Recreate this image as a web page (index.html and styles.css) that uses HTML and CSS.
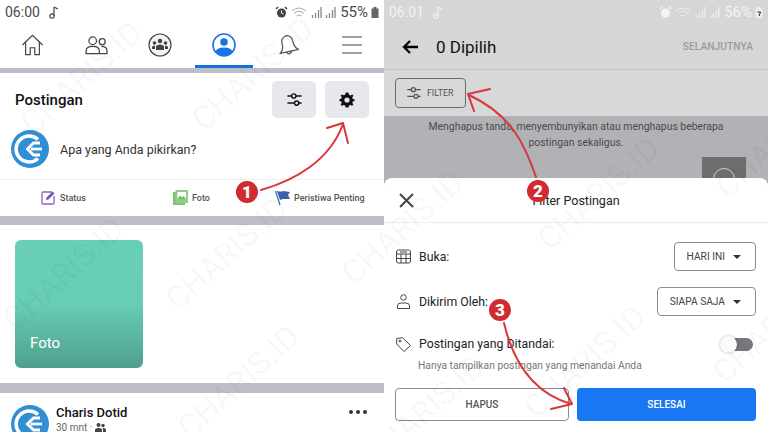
FILE: index.html
```html
<!DOCTYPE html>
<html lang="en">
<head>
    <meta charset="UTF-8">
    <meta name="viewport" content="width=device-width, initial-scale=1.0">
    <title>Filter Postingan</title>
    <link rel="stylesheet" href="styles.css">
</head>
<body>

<svg width="0" height="0" class="defs">
    <symbol id="logo" viewBox="0 0 38 38">
        <circle cx="19" cy="19" r="19" fill="#2f8ed4"/>
        <path d="M27 9.500A13 13 0 1 0 27 28.500" fill="none" stroke="#fff" stroke-width="3.600"/>
        <path d="M29 13H22.500L16.500 19 22.500 25H29" fill="none" stroke="#fff" stroke-width="3"/>
        <path d="M20 19H31" stroke="#fff" stroke-width="2.800"/>
    </symbol>
    <symbol id="sliders" viewBox="0 0 24 24">
        <path d="M2 7H8M14 7H22M2 17H12M18 17H22" fill="none" stroke="currentColor" stroke-width="2"/>
        <circle cx="11" cy="7" r="3" fill="none" stroke="currentColor" stroke-width="2"/>
        <circle cx="15" cy="17" r="3" fill="none" stroke="currentColor" stroke-width="2"/>
    </symbol>
</svg>

<div class="stage">

    <!-- kiri -->
    <div class="pane">
        <div class="status">
            <span class="time">06:00</span>
            <svg class="note" width="10" height="13" viewBox="0 0 10 13"><path d="M5 1V10M5 1 9 3" fill="none" stroke="#444" stroke-width="1.200"/><circle cx="3" cy="10" r="2.200" fill="none" stroke="#444" stroke-width="1.200"/></svg>
            <span class="status-right">
                <svg width="13" height="13" viewBox="0 0 13 13"><circle cx="6.500" cy="7" r="4.500" fill="#444"/><path d="M1 3 3 1M12 3 10 1" stroke="#444" stroke-width="1.500"/><path d="M6.500 4.500V7L8.500 8" fill="none" stroke="#fff"/></svg>
                <svg width="17" height="13" viewBox="0 0 17 13"><path d="M1 5Q8 -1 15 5M3 7.500Q8 3 13 7.500M5.500 10Q8 8 10.500 10" fill="none" stroke="#aaa"/></svg>
                <svg width="11" height="13" viewBox="0 0 11 13"><path d="M1.500 12V9M4.500 12V7M7.500 12V4M10 12V1" stroke="#888" stroke-width="1.300"/></svg>
                <svg width="11" height="13" viewBox="0 0 11 13"><path d="M1.500 12V9M4.500 12V7M7.500 12V4M10 12V1" stroke="#888" stroke-width="1.300"/></svg>
                <span class="pct">55%</span>
                <svg width="8" height="13" viewBox="0 0 8 13"><path d="M2.500 1H5.500V2.500H7.500V12H.5V2.500H2.500Z" fill="#666"/></svg>
            </span>
        </div>

        <div class="nav">
            <svg width="23" height="22" viewBox="0 0 24 24" fill="none" stroke="#444" stroke-width="1.300"><path d="M1 12 12 1.500 23 12M4.500 9V22.500H9.500V15H14.500V22.500H19.500V9"/></svg>
            <svg width="23" height="19" viewBox="0 0 24 20" fill="none" stroke="#444" stroke-width="1.300"><circle cx="8" cy="5" r="4"/><circle cx="18" cy="6" r="3.200"/><path d="M1 18.500V16Q1 11 8 11T15 16V18.500ZM17 11Q23 11 23 15.500V18.500H15.500"/></svg>
            <svg width="24" height="24" viewBox="0 0 24 24"><circle cx="12" cy="12" r="11" fill="#f4f4f4" stroke="#444" stroke-width="1.200"/><circle cx="12" cy="8" r="2.300" fill="#444"/><circle cx="6.500" cy="10" r="1.800" fill="#444"/><circle cx="17.500" cy="10" r="1.800" fill="#444"/><path d="M8 17V13Q12 10 16 13V17ZM4 16V13.500L7 12.500V16ZM20 16V13.500L17 12.500V16Z" fill="#444"/></svg>
            <svg width="24" height="24" viewBox="0 0 24 24"><circle cx="12" cy="12" r="11" fill="#fff" stroke="#1a73e3" stroke-width="1.600"/><circle cx="12" cy="9" r="3.800" fill="#1a73e3"/><path d="M3.500 18.500Q5 14.500 12 14.500T20.500 18.500Q17 23 12 23T3.500 18.500Z" fill="#1a73e3"/></svg>
            <svg width="22" height="24" viewBox="0 0 22 24" fill="none" stroke="#555" stroke-width="1.200"><g transform="rotate(-12 11 12)"><path d="M2 18.500Q6 15 5.500 9.500T11 2.500Q16.500 3 16.500 9.500T20.500 18.500ZM8 19Q10 23 13.500 19"/></g></svg>
            <svg width="20" height="18" viewBox="0 0 20 18" stroke="#444" stroke-width="1.200"><path d="M0 1H20M0 9H20M0 17H20"/></svg>
        </div>
        <div class="nav-active"></div>
        <div class="strip strip-thin"></div>

        <div class="composer">
            <div class="composer-head">
                <h2>Postingan</h2>
                <div class="square-btn"><svg class="sq-icon" width="17" height="17"><use href="#sliders"/></svg></div>
                <div class="square-btn"><svg width="16" height="16" viewBox="0 0 16 16"><path d="M8 .5 9.500 .8 10 2.800 11.600 3.400 13.300 2.400 14.400 3.700 13.300 5.400 13.800 7 15.600 7.500V9.100L13.800 9.600 13.300 11 14.400 12.600 13.100 13.800 11.500 12.900 10 13.500 9.500 15.500H6.700L6.100 13.500 4.600 12.900 2.900 13.900 1.700 12.600 2.700 11 2.200 9.500 .4 9V7.200L2.200 6.700 2.800 5.200 1.700 3.600 3 2.400 4.600 3.300 6.100 2.700 6.600 .8Z M8 5.400A2.600 2.600 0 1 0 8 10.600 2.600 2.600 0 1 0 8 5.400Z" fill="#111" fill-rule="evenodd"/></svg></div>
            </div>
            <div class="composer-input">
                <svg width="38" height="38"><use href="#logo"/></svg>
                <span>Apa yang Anda pikirkan?</span>
            </div>
            <div class="actions">
                <div class="action action-status">
                    <svg width="15" height="15" viewBox="0 0 15 15"><path d="M11 2H2Q1 2 1 3V13Q1 14 2 14H12Q13 14 13 13V6" fill="none" stroke="#8a63c9" stroke-width="1.300"/><path d="M5 10 5.500 7.500 11.500 1.500 13.500 3.500 7.500 9.500Z" fill="#7b55c0"/></svg>
                    Status
                </div>
                <div class="action action-foto">
                    <svg width="15" height="15" viewBox="0 0 15 15"><rect x="0" y="2" width="12" height="13" fill="#7cc576"/><rect x="2.500" y="0" width="12.500" height="13" fill="#8fd085"/><rect x="4.500" y="2" width="8.500" height="7" fill="#fff"/><path d="M4.500 9 7 5.500 9 7.500 10.500 6 13 9Z" fill="#6fbb68"/></svg>
                    Foto
                </div>
                <div class="action action-event">
                    <svg width="15" height="16" viewBox="0 0 15 16"><path d="M.5 1 5 15" stroke="#3d6cb4" stroke-width="1.200"/><path d="M2 1 Q6 2 8 1L15 2 13 5 15 9 8 9 5 10Z" fill="#3b5fa8"/></svg>
                    Peristiwa Penting
                </div>
            </div>
        </div>
        <div class="strip strip-wide"></div>

        <div class="album-row">
            <div class="album"><span>Foto</span></div>
        </div>
        <div class="strip strip-wide strip-last"></div>

        <div class="post">
            <svg width="38" height="38"><use href="#logo"/></svg>
            <div class="post-meta">
                <div class="post-name">Charis Dotid</div>
                <div class="post-sub">30 mnt &middot;
                    <svg width="11" height="10" viewBox="0 0 11 10" fill="#444"><circle cx="3.500" cy="2" r="2"/><circle cx="8" cy="2.500" r="1.700"/><path d="M0 10V7Q0 5 3.500 5T7 7V10ZM8 10V6.500Q8 5 7 5Q11 4.500 11 7V10Z"/></svg>
                </div>
            </div>
            <div class="dots"><i></i><i></i><i></i></div>
        </div>
    </div>

    <!-- kanan -->
    <div class="pane pane-dim">
        <div class="status status-dim">
            <span class="time">06:01</span>
            <svg class="note" width="10" height="13" viewBox="0 0 10 13"><path d="M5 1V10M5 1 9 3" fill="none" stroke="#f2f2f2" stroke-width="1.200"/><circle cx="3" cy="10" r="2.200" fill="none" stroke="#f2f2f2" stroke-width="1.200"/></svg>
            <span class="status-right">
                <svg width="13" height="13" viewBox="0 0 13 13"><circle cx="6.500" cy="7" r="4.500" fill="#f4f4f4"/><path d="M1 3 3 1M12 3 10 1" stroke="#f4f4f4" stroke-width="1.500"/></svg>
                <svg width="17" height="13" viewBox="0 0 17 13"><path d="M1 5Q8 -1 15 5M3 7.500Q8 3 13 7.500M5.500 10Q8 8 10.500 10" fill="none" stroke="#eee"/></svg>
                <svg width="11" height="13" viewBox="0 0 11 13"><path d="M1.500 12V9M4.500 12V7M7.500 12V4M10 12V1" stroke="#eee" stroke-width="1.300"/></svg>
                <svg width="11" height="13" viewBox="0 0 11 13"><path d="M1.500 12V9M4.500 12V7M7.500 12V4M10 12V1" stroke="#eee" stroke-width="1.300"/></svg>
                <span class="pct">56%</span>
                <svg width="8" height="13" viewBox="0 0 8 13"><path d="M2.500 1H5.500V2.500H7.500V12H.5V2.500H2.500Z" fill="#eee"/><path d="M2.500 6H5.500L4 10" fill="none" stroke="#222"/></svg>
            </span>
        </div>

        <div class="appbar">
            <svg width="16" height="14" viewBox="0 0 16 14" fill="none" stroke="#000" stroke-width="2.300"><path d="M16 7H2M8 1 2 7 8 13"/></svg>
            <span class="appbar-title">0 Dipilih</span>
            <span class="appbar-next">SELANJUTNYA</span>
        </div>

        <div class="filter-row">
            <div class="filter-btn">
                <svg class="filter-icon" width="16" height="16"><use href="#sliders"/></svg>
                FILTER
            </div>
        </div>

        <div class="dim-body">
            <p>Menghapus tanda, menyembunyikan atau menghapus beberapa<br>postingan sekaligus.</p>
            <div class="dim-card">
                <div class="dim-card-bar"></div>
                <div class="dim-card-thumb"><i></i></div>
            </div>
        </div>

        <div class="sheet">
            <div class="sheet-head">
                <svg class="sheet-close" width="15" height="15" viewBox="0 0 15 15" stroke="#444" stroke-width="2"><path d="M1 1 14 14M14 1 1 14"/></svg>
                <span>Filter Postingan</span>
            </div>
            <div class="sheet-row sheet-row-first">
                <svg width="15" height="15" viewBox="0 0 15 15" fill="none" stroke="#444"><rect x=".5" y="1" width="14" height="13" rx="2"/><path d="M.5 5H14.500M.5 9.500H14.500M5 5V14M10 5V14M4 3H11"/></svg>
                <span class="row-label">Buka:</span>
                <div class="select">HARI INI <i></i></div>
            </div>
            <div class="sheet-row">
                <svg width="15" height="15" viewBox="0 0 15 15" fill="none" stroke="#444"><circle cx="7.500" cy="3.500" r="2.800"/><path d="M1.500 14.500V12Q1.500 9 5 9H10Q13.500 9 13.500 12V14.500Z"/></svg>
                <span class="row-label">Dikirim Oleh:</span>
                <div class="select">SIAPA SAJA <i></i></div>
            </div>
            <div class="sheet-row sheet-row-tag">
                <svg width="15" height="15" viewBox="0 0 15 15" fill="none" stroke="#444"><path d="M.7 1.500 6.500 .7 14.500 8.500 8 14.500 .7 7Z"/><circle cx="4" cy="4" r="1"/></svg>
                <span class="row-label">Postingan yang Ditandai:</span>
                <div class="toggle"><i></i></div>
            </div>
            <p class="row-hint">Hanya tampilkan postingan yang menandai Anda</p>
            <div class="sheet-actions">
                <div class="btn btn-clear">HAPUS</div>
                <div class="btn btn-done">SELESAI</div>
            </div>
        </div>
    </div>

    <!-- watermark, panah dan nomor di atas screenshot -->
    <svg class="overlay" width="768" height="432" viewBox="0 0 768 432">
        <g class="wm">
            <text transform="translate(33 136) rotate(-42)">CHARIS.ID</text>
            <text transform="translate(204 132) rotate(-42)">CHARIS.ID</text>
            <text transform="translate(15 332) rotate(-42)">CHARIS.ID</text>
            <text transform="translate(178 312) rotate(-42)">CHARIS.ID</text>
            <text transform="translate(354 286) rotate(-42)">CHARIS.ID</text>
            <text transform="translate(190 440) rotate(-42)">CHARIS.ID</text>
            <text transform="translate(375 470) rotate(-42)">CHARIS.ID</text>
            <text transform="translate(550 252) rotate(-42)">CHARIS.ID</text>
            <text transform="translate(728 200) rotate(-42)">CHARIS.ID</text>
            <text transform="translate(536 420) rotate(-42)">CHARIS.ID</text>
            <text transform="translate(725 385) rotate(-42)">CHARIS.ID</text>
        </g>
        <g class="arrow">
            <path d="M261 190C296 180 330 160 343 124"/>
            <path d="M327 128 343 123 348 143"/>
            <path d="M536 177C525 145 512 115 469 95"/>
            <path d="M490 89 468 94 474 111"/>
            <path d="M504 323C515 370 540 395 571 404"/>
            <path d="M551 409 572 404 564 388"/>
        </g>
        <g class="badge">
            <circle cx="247" cy="192" r="11"/><text x="247" y="198">1</text>
            <circle cx="538" cy="191" r="11"/><text x="538" y="197">2</text>
            <circle cx="500" cy="310" r="11"/><text x="500" y="316">3</text>
        </g>
    </svg>
</div>

</body>
</html>
```
FILE: styles.css
```css
* {
    box-sizing: border-box;
}
body {
    margin: 0;
    font-family: Roboto, "Noto Sans", sans-serif;
    background-color: #fff;
}
.defs {
    position: absolute;
}
.stage {
    position: relative;
    display: grid;
    grid-template-columns: 384px 384px;
    width: 768px;
    height: 432px;
    overflow: hidden;
}
.pane {
    position: relative;
    height: 432px;
    overflow: hidden;
    background-color: #fff;
}

/* status bar */
.status {
    display: flex;
    align-items: center;
    height: 24px;
    padding: 0 5px;
    color: #4a4a4a;
}
.time {
    font-size: 14px;
    margin-right: 9px;
}
.status-right {
    display: flex;
    align-items: center;
    gap: 3px;
    margin-left: auto;
}
.pct {
    font-size: 15px;
    margin-left: 1px;
}
.status-dim {
    color: #f4f4f4;
    background-color: #d6d6d6;
}

/* nav kiri */
.nav {
    display: grid;
    grid-template-columns: repeat(6, 64px);
    justify-items: center;
    align-items: center;
    height: 41px;
    padding-top: 1px;
}
.nav-active {
    width: 58px;
    height: 3px;
    margin-left: 195px;
    background-color: #1a6fdc;
}
.strip {
    background-color: #bcbfc9;
}
.strip-thin {
    height: 5px;
}
.strip-wide {
    height: 9px;
}
.strip-last {
    height: 10px;
}

/* postingan */
.composer {
    height: 143px;
}
.composer-head {
    display: flex;
    align-items: center;
    gap: 9px;
    padding: 8px 15px 0;
}
.composer-head h2 {
    flex: 1;
    margin: 0;
    font-size: 15px;
    font-weight: 500;
    color: #111;
}
.square-btn {
    display: flex;
    align-items: center;
    justify-content: center;
    width: 44px;
    height: 37px;
    background-color: #e6e8ec;
    border-radius: 5px;
}
.sq-icon {
    color: #111;
}
.composer-input {
    display: flex;
    align-items: center;
    gap: 11px;
    padding: 12px 11px 0;
    font-size: 12.500px;
    color: #333;
}
.actions {
    position: relative;
    height: 38px;
    margin-top: 11px;
    border-top: 1px solid #eceef0;
    font-size: 9px;
    font-weight: 500;
    color: #555;
}
.action {
    position: absolute;
    top: 10px;
    display: flex;
    align-items: center;
    gap: 4px;
}
.action-status {
    left: 41px;
}
.action-foto {
    left: 173px;
}
.action-event {
    left: 275px;
}

/* album */
.album-row {
    height: 158px;
    padding: 15px;
}
.album {
    display: flex;
    align-items: flex-end;
    width: 128px;
    height: 128px;
    padding: 0 15px 16px;
    border-radius: 6px;
    background: linear-gradient(#68cfb6 0%, #68cdb5 50%, #4f9f8e 100%);
    color: #fff;
    font-size: 15px;
}

/* post */
.post {
    display: flex;
    gap: 7px;
    padding: 12px 17px 0 11px;
}
.post-name {
    font-size: 13px;
    font-weight: 500;
    color: #111;
    line-height: 15px;
}
.post-sub {
    display: flex;
    align-items: center;
    gap: 3px;
    margin-top: 2px;
    font-size: 10px;
    color: #666;
}
.post-meta {
    flex: 1;
}
.dots {
    display: flex;
    gap: 3px;
    padding-top: 5px;
}
.dots i {
    width: 4px;
    height: 4px;
    border-radius: 50%;
    background-color: #333;
}

/* kanan, bagian gelap */
.appbar {
    display: flex;
    align-items: center;
    height: 46px;
    padding: 0 15px 0 18px;
    background-color: #d6d6d6;
    border-bottom: 1px solid #c4c4c4;
}
.appbar-title {
    margin-left: 18px;
    font-size: 17px;
    color: #111;
}
.appbar-next {
    margin-left: auto;
    font-size: 10.300px;
    font-weight: 500;
    color: #9c9c9c;
}
.filter-row {
    height: 46px;
    padding: 8px 11px;
    background-color: #d8d8d8;
}
.filter-btn {
    display: flex;
    align-items: center;
    gap: 5px;
    width: 71px;
    height: 30px;
    padding-left: 10px;
    border: 1px solid #6c6c6c;
    border-radius: 4px;
    font-size: 8.800px;
    color: #555;
}
.filter-icon {
    color: #555;
}
.dim-body {
    height: 80px;
    padding-top: 3px;
    background-color: #b1b2b6;
}
.dim-body p {
    margin: 0;
    font-size: 10.400px;
    line-height: 15.500px;
    text-align: center;
    color: #4a4a4a;
}
.dim-card {
    display: flex;
    align-items: flex-end;
    height: 27px;
    margin: 7px 22px 0 32px;
}
.dim-card-bar {
    flex: 1;
    height: 10px;
    margin-bottom: -4px;
    background-color: #d6d6d6;
}
.dim-card-thumb {
    display: flex;
    justify-content: center;
    width: 44px;
    height: 27px;
    padding-top: 11px;
    background-color: #6e6e6e;
}
.dim-card-thumb i {
    width: 22px;
    height: 22px;
    border: 1px solid #ccc;
    border-radius: 50%;
}

/* bottom sheet */
.sheet {
    position: absolute;
    left: 0;
    right: 0;
    top: 178px;
    bottom: 0;
    padding: 0 12px;
    background-color: #fff;
    border-radius: 8px 8px 0 0;
}
.sheet-head {
    display: flex;
    align-items: center;
    justify-content: center;
    position: relative;
    height: 45px;
    margin: 0 -12px;
    border-bottom: 1px solid #ececec;
    font-size: 12.500px;
    color: #222;
}
.sheet-close {
    position: absolute;
    left: 15px;
    top: 15px;
}
.sheet-row {
    display: flex;
    align-items: center;
    gap: 8px;
    height: 29px;
    margin-top: 16px;
}
.sheet-row-first {
    margin-top: 19px;
}
.sheet-row-tag {
    height: 20px;
    margin-top: 18px;
}
.row-label {
    flex: 1;
    font-size: 12.300px;
    color: #222;
}
.select {
    display: flex;
    align-items: center;
    gap: 8px;
    height: 29px;
    padding: 0 14px 0 12px;
    border: 1px solid #8c8c8c;
    border-radius: 4px;
    font-size: 10.200px;
    color: #444;
}
.select i {
    width: 0;
    height: 0;
    border-left: 4px solid transparent;
    border-right: 4px solid transparent;
    border-top: 4px solid #333;
}
.toggle {
    position: relative;
    width: 30px;
    height: 13px;
    margin-right: 3px;
    background-color: #77787c;
    border-radius: 7px;
}
.toggle i {
    position: absolute;
    left: -3px;
    top: -2px;
    width: 17px;
    height: 17px;
    background-color: #fafafa;
    border-radius: 50%;
    box-shadow: 0 0 3px rgba(0, 0, 0, 0.3);
}
.row-hint {
    margin: 5px 0 0 22px;
    font-size: 10.300px;
    color: #777;
}
.sheet-actions {
    display: grid;
    grid-template-columns: 174px 179px;
    gap: 8px;
    margin: 16px 0 0 -1px;
}
.btn {
    display: flex;
    align-items: center;
    justify-content: center;
    height: 33px;
    border-radius: 4px;
    font-size: 10px;
    font-weight: 500;
}
.btn-clear {
    border: 1px solid #8c8c8c;
    color: #555;
}
.btn-done {
    background-color: #1877f2;
    color: #fff;
}

/* overlay */
.overlay {
    position: absolute;
    left: 0;
    top: 0;
    pointer-events: none;
}
.wm text {
    font-family: Roboto, sans-serif;
    font-size: 32px;
    font-weight: 400;
    fill: rgba(0, 0, 0, 0.04);
}
.arrow path {
    fill: none;
    stroke: #d8363a;
    stroke-width: 2;
    stroke-linecap: round;
    stroke-linejoin: round;
}
.badge circle {
    fill: #d12a2f;
}
.badge text {
    font-family: Roboto, sans-serif;
    font-size: 17px;
    font-weight: 900;
    fill: #fff;
    text-anchor: middle;
}
```
